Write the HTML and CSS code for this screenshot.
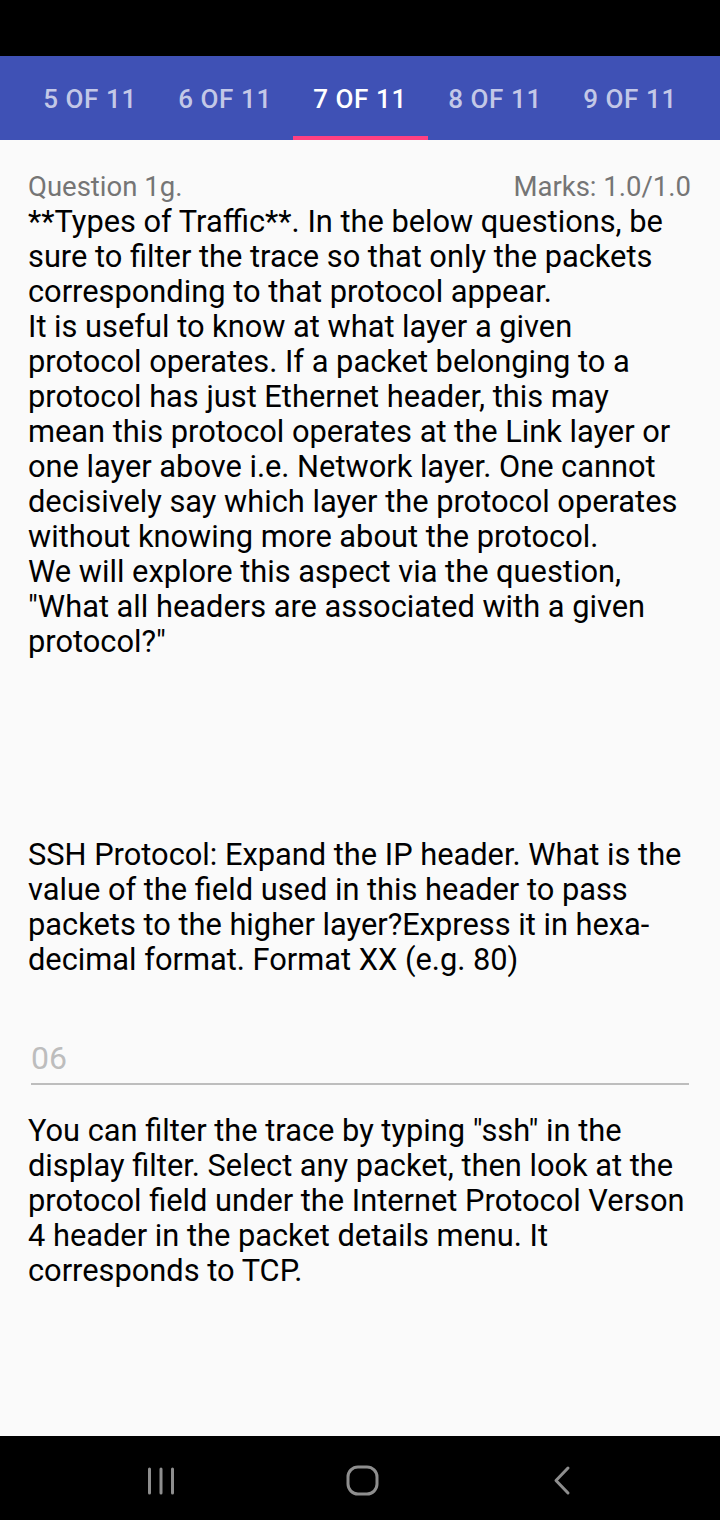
FILE: index.html
```html
<!DOCTYPE html>
<html>
<head>
<meta charset="utf-8">
<link rel="stylesheet" href="styles.css">
</head>
<body>
<div class="screen">
  <div class="statusbar"></div>
  <nav class="tabs">
    <div class="tab">5 of 11</div>
    <div class="tab">6 of 11</div>
    <div class="tab active">7 of 11</div>
    <div class="tab">8 of 11</div>
    <div class="tab">9 of 11</div>
  </nav>
  <main class="content">
    <div class="qhead">
      <span class="qnum">Question 1g.</span>
      <span class="marks">Marks: 1.0/1.0</span>
    </div>
    <p class="body intro">**Types of Traffic**. In the below questions, be<br>sure to filter the trace so that only the packets<br>corresponding to that protocol appear.<br>It is useful to know at what layer a given<br>protocol operates. If a packet belonging to a<br>protocol has just Ethernet header, this may<br>mean this protocol operates at the Link layer or<br>one layer above i.e. Network layer. One cannot<br>decisively say which layer the protocol operates<br>without knowing more about the protocol.<br>We will explore this aspect via the question,<br>"What all headers are associated with a given<br>protocol?"</p>
    <p class="body question">SSH Protocol: Expand the IP header. What is the<br>value of the field used in this header to pass<br>packets to the higher layer?Express it in hexa-<br>decimal format. Format XX (e.g. 80)</p>
    <div class="answer">
      <span class="answer-text">06</span>
    </div>
    <p class="body feedback">You can filter the trace by typing "ssh" in the<br>display filter. Select any packet, then look at the<br>protocol field under the Internet Protocol Verson<br>4 header in the packet details menu. It<br>corresponds to TCP.</p>
  </main>
  <div class="navbar">
    <svg class="nav-icon" width="30" height="30" viewBox="0 0 30 30">
      <g stroke="#8e8e8e" stroke-width="3" stroke-linecap="round">
        <line x1="3.5" y1="3" x2="3.5" y2="27"/>
        <line x1="15" y1="3" x2="15" y2="27"/>
        <line x1="26.5" y1="3" x2="26.5" y2="27"/>
      </g>
    </svg>
    <svg class="nav-icon" width="34" height="32" viewBox="0 0 34 32">
      <rect x="2" y="2" width="29" height="27" rx="10" ry="10" fill="none" stroke="#8e8e8e" stroke-width="3"/>
    </svg>
    <svg class="nav-icon" width="24" height="32" viewBox="0 0 24 32">
      <polyline points="18,3 6,15.5 18,28" fill="none" stroke="#8e8e8e" stroke-width="3" stroke-linecap="round" stroke-linejoin="round"/>
    </svg>
  </div>
</div>
</body>
</html>
```
FILE: styles.css
```css
html, body {
  margin: 0;
  padding: 0;
  background: #fafafa;
}
.screen {
  width: 720px;
  height: 1520px;
  display: flex;
  flex-direction: column;
  font-family: Roboto, "Liberation Sans", sans-serif;
  background: #fafafa;
}
.statusbar {
  height: 56px;
  background: #000;
  flex: none;
}
.tabs {
  height: 84px;
  flex: none;
  background: #3f51b5;
  display: flex;
  padding-left: 22.5px;
  box-sizing: border-box;
}
.tab {
  width: 135px;
  flex: none;
  display: flex;
  align-items: center;
  justify-content: center;
  text-transform: uppercase;
  font-weight: 500;
  font-size: 26px;
  letter-spacing: 0.6px;
  color: rgba(255,255,255,0.7);
  box-sizing: border-box;
  padding-top: 6px;
  border-bottom: 4px solid transparent;
}
.tab.active {
  color: #fff;
  border-bottom-color: #ff4081;
}
.content {
  flex: 1;
  padding: 30px 29px 0 28px;
}
.qhead {
  display: flex;
  justify-content: space-between;
  font-size: 27.5px;
  color: #757575;
  line-height: 33px;
}
.body {
  margin: 0;
  font-size: 30.8px;
  line-height: 35px;
  color: #000;
  white-space: nowrap;
}
.intro {
  margin-top: 1px;
}
.question {
  margin-top: 178px;
}
.answer {
  margin: 54px 2px 0 3px;
  border-bottom: 2px solid #bdbdbd;
  height: 54px;
  box-sizing: border-box;
  padding-top: 7px;
}
.answer-text {
  font-size: 32px;
  color: #bdbdbd;
  line-height: 40px;
}
.feedback {
  margin-top: 28px;
}
.navbar {
  height: 84px;
  flex: none;
  background: #000;
  display: flex;
  align-items: center;
  justify-content: space-between;
  padding: 6px 146px 0 146px;
  box-sizing: border-box;
}
.nav-icon {
  display: block;
}
```
